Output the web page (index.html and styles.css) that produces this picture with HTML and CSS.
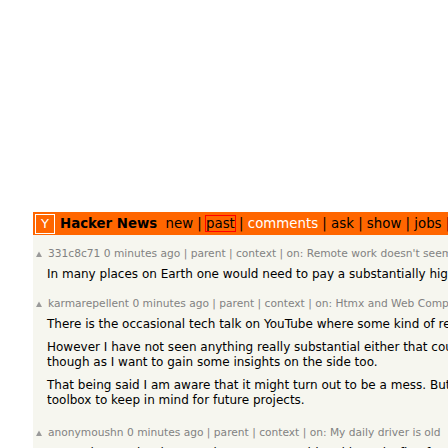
FILE: index.html
```html
<!DOCTYPE html>
<html>
<head>
<meta charset="utf-8">
<link rel="stylesheet" href="styles.css">
</head>
<body>
<div class="page">
  <div class="header">
    <span class="logo">Y</span>
    <span class="pagetop"><b class="hnname">Hacker News</b> <a>new</a> | <a class="boxed">past</a> | <a class="active">comments</a> | <a>ask</a> | <a>show</a> | <a>jobs</a> | <a>submit</a></span>
  </div>
  <div class="content">
    <div class="comment first">
      <div class="comhead"><svg class="arrow" width="10" height="10" viewBox="0 0 10 10"><polygon points="1,10 4,4.5 7,10" fill="#9a9a9a"/></svg><span>331c8c71 0 minutes ago | parent | context | on: Remote work doesn't seem to be going away</span></div>
      <div class="commtext">
        <p>In many places on Earth one would need to pay a substantially higher salary to get the same talent.</p>
      </div>
    </div>
    <div class="comment second">
      <div class="comhead"><svg class="arrow" width="10" height="10" viewBox="0 0 10 10"><polygon points="1,10 4,4.5 7,10" fill="#9a9a9a"/></svg><span>karmarepellent 0 minutes ago | parent | context | on: Htmx and Web Components</span></div>
      <div class="commtext">
        <p>There is the occasional tech talk on YouTube where some kind of real-world experience is shared.</p>
        <p>However I have not seen anything really substantial either that could be used in production,<br>though as I want to gain some insights on the side too.</p>
        <p>That being said I am aware that it might turn out to be a mess. But it's a nice<br>toolbox to keep in mind for future projects.</p>
      </div>
    </div>
    <div class="comment">
      <div class="comhead"><svg class="arrow" width="10" height="10" viewBox="0 0 10 10"><polygon points="1,10 4,4.5 7,10" fill="#9a9a9a"/></svg><span>anonymoushn 0 minutes ago | parent | context | on: My daily driver is old</span></div>
      <div class="commtext">
        <p>I use a laptop that is more than ten years old and it works fine for everything I need.</p>
      </div>
    </div>
  </div>
</div>
</body>
</html>
```

FILE: styles.css
```css
html, body {
  margin: 0;
  padding: 0;
  background: #ffffff;
  overflow: hidden;
  height: 448px;
}

body {
  font-family: "DejaVu Sans", Verdana, sans-serif;
}

.page {
  margin: 212px 0 0 33px;
  width: 760px;
}

.header {
  background: #ff6600;
  height: 23px;
  display: flex;
  align-items: center;
  padding-left: 2px;
  white-space: nowrap;
}

.logo {
  box-sizing: border-box;
  width: 20px;
  height: 20px;
  border: 1px solid #ffffff;
  color: #ffffff;
  font-size: 13px;
  display: flex;
  align-items: center;
  justify-content: center;
}

.pagetop {
  font-size: 13.33px;
  color: #000000;
  margin-left: 5px;
}

.hnname {
  margin-right: 4px;
}

.pagetop a {
  color: #000000;
}

.pagetop .active {
  color: #ffffff;
}

.pagetop .boxed {
  outline: 1px solid #ff0000;
}

.content {
  background: #f6f6ef;
  padding-top: 12px;
  height: 300px;
}

.comment {
  padding-left: 2px;
  margin-bottom: 15px;
}

.comment.second {
  margin-bottom: 18px;
}

.comhead {
  font-size: 10.67px;
  line-height: 13px;
  color: #828282;
  white-space: nowrap;
}

.arrow {
  display: inline-block;
  vertical-align: baseline;
  margin-right: 3px;
}

.commtext {
  margin-top: 7px;
  margin-left: 12px;
  font-size: 12px;
  line-height: 15px;
  color: #000000;
  white-space: nowrap;
}

.commtext p {
  margin: 0 0 8px 0;
}

.commtext p:last-child {
  margin-bottom: 0;
}
```
